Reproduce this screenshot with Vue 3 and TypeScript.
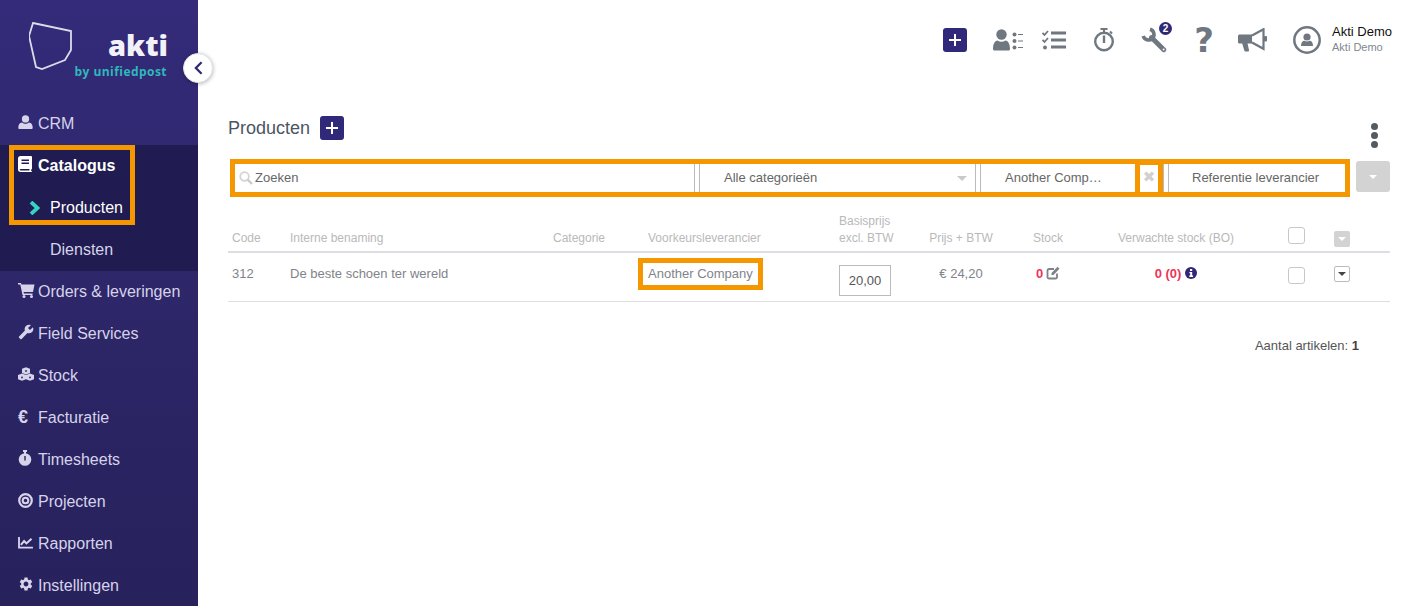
<script setup lang="ts">
interface Item { label: string; icon: string; }
const first: Item = { label: 'CRM', icon: 'user' };
const rest: Item[] = [
  { label: 'Orders & leveringen', icon: 'cart' },
  { label: 'Field Services', icon: 'wrench' },
  { label: 'Stock', icon: 'cubes' },
  { label: 'Facturatie', icon: 'euro' },
  { label: 'Timesheets', icon: 'watch' },
  { label: 'Projecten', icon: 'target' },
  { label: 'Rapporten', icon: 'chart' },
  { label: 'Instellingen', icon: 'cog' },
];
const cog = 'M19.14 12.94c.04-.3.06-.61.06-.94 0-.32-.02-.64-.07-.94l2.03-1.58c.18-.14.23-.41.12-.61l-1.92-3.32c-.12-.22-.37-.29-.59-.22l-2.39.96c-.5-.38-1.03-.7-1.62-.94l-.36-2.54c-.04-.24-.24-.41-.48-.41h-3.84c-.24 0-.43.17-.47.41l-.36 2.54c-.59.24-1.13.57-1.62.94l-2.39-.96c-.22-.08-.47 0-.59.22L2.74 8.87c-.12.21-.08.47.12.61l2.03 1.58c-.05.3-.09.63-.09.94s.02.64.07.94l-2.03 1.58c-.18.14-.23.41-.12.61l1.92 3.32c.12.22.37.29.59.22l2.39-.96c.5.38 1.03.7 1.62.94l.36 2.54c.05.24.24.41.48.41h3.84c.24 0 .44-.17.47-.41l.36-2.54c.59-.24 1.13-.56 1.62-.94l2.39.96c.22.08.47 0 .59-.22l1.92-3.32c.12-.22.07-.47-.12-.61l-2.01-1.58zM12 15.6c-1.98 0-3.6-1.62-3.6-3.6s1.62-3.6 3.6-3.6 3.6 1.62 3.6 3.6-1.62 3.6-3.6 3.6z';
const wrench = 'M22.7 19l-9.1-9.1c.9-2.3.4-5-1.5-6.9-2-2-5-2.4-7.4-1.3L9 6 6 9 1.6 4.7C.4 7.1.9 10.1 2.9 12.1c1.9 1.9 4.6 2.4 6.9 1.5l9.1 9.1c.4.4 1 .4 1.4 0l2.3-2.3c.5-.4.5-1.1.1-1.4z';
</script>

<template>
  <div class="app">
    <aside class="sidebar">
      <div class="brand">
        <svg class="logo-mark" viewBox="0 0 46 50" width="46" height="50">
          <polygon points="4,1 42,9 42,28 36,38 13,47 7,45 0,14" fill="none" stroke="#dddbea" stroke-width="1.800" />
        </svg>
        <div class="wordmark">akti</div>
        <div class="byline">by unifiedpost</div>
      </div>
      <button class="toggle" aria-label="Inklappen">
        <svg viewBox="0 0 12 16" width="11" height="14"><path d="M9.500 1.500 3 8l6.500 6.500" fill="none" stroke="#2e2876" stroke-width="2.600" /></svg>
      </button>

      <nav class="menu">
        <a class="item">
          <span class="ico">
            <svg viewBox="0 0 16 16" width="15" height="15"><circle cx="8" cy="4.200" r="3.900" fill="currentColor" /><path d="M1.600 15c-.8 0-1.300-.5-1.300-1.400C.3 10.400 1.700 8 4.300 8c1 1 2.300 1.400 3.700 1.400S10.700 9 11.700 8c2.600 0 4 2.400 4 5.600 0 .9-.5 1.400-1.300 1.400z" fill="currentColor" /></svg>
          </span>{{ first.label }}
        </a>
        <div class="sub">
          <div class="hl">
            <a class="item active">
              <span class="ico">
                <svg viewBox="0 0 14 16" width="14" height="16"><path fill-rule="evenodd" d="M2.500 0H13a1 1 0 0 1 1 1v11.500c0 .5-.3.8-.7.9-.3.600-.3 1.200 0 1.700.4.100.7.400.7.900H2.500C1 16 0 15 0 13.500v-11C0 1 1 0 2.500 0zM3.500 3.500V5H11V3.500zM3.500 6.500V8H11V6.500zM2.500 13c-1 .1-1 1.500 0 1.600h9c-.1-.5-.1-1.100 0-1.600z" fill="#fff" /></svg>
              </span>Catalogus
            </a>
            <a class="item subitem current">
              <svg class="chev" viewBox="0 0 11 14" width="11" height="14"><path d="M2 1 8.500 7 2 13" fill="none" stroke="#35d3c2" stroke-width="3.800" /></svg>
              Producten
            </a>
          </div>
          <a class="item subitem">Diensten</a>
        </div>
        <a v-for="it in rest" :key="it.label" class="item">
          <span class="ico">
            <svg v-if="it.icon === 'cart'" viewBox="0 0 17 16" width="17" height="16"><path d="M0 1h3l.5 1.600H16.500L15 10H5.500L6 11.500H14.500V13H4.500L2.300 2.500H0z" fill="currentColor" /><circle cx="6" cy="14.500" r="1.500" fill="currentColor" /><circle cx="13.500" cy="14.500" r="1.500" fill="currentColor" /></svg>
            <svg v-else-if="it.icon === 'wrench'" class="mirror" viewBox="0 0 24 24" width="16" height="16"><path :d="wrench" fill="currentColor" /></svg>
            <svg v-else-if="it.icon === 'cubes'" viewBox="0 0 16 14" width="16" height="14">
              <path d="M8 .2 12 1.700V6L8 7.500 4 6V1.700z" fill="currentColor" />
              <path d="M4 6.500 8 8V12.300L4 13.800 0 12.300V8z" fill="currentColor" />
              <path d="M12 6.500 16 8V12.300L12 13.800 8 12.300V8z" fill="currentColor" />
              <g fill="#2a2461"><circle cx="8" cy="4" r=".9" /><circle cx="4" cy="10.400" r=".9" /><circle cx="12" cy="10.400" r=".9" /></g>
            </svg>
            <span v-else-if="it.icon === 'euro'" class="euro">€</span>
            <svg v-else-if="it.icon === 'watch'" viewBox="0 0 14 16" width="14" height="16"><rect x="5" y="0" width="4" height="2" fill="currentColor" /><rect x="6" y="1" width="2" height="3" fill="currentColor" /><circle cx="7" cy="9.500" r="6.300" fill="currentColor" /><rect x="6.300" y="6" width="1.400" height="4.500" fill="#29235f" /></svg>
            <svg v-else-if="it.icon === 'target'" viewBox="0 0 16 16" width="15" height="15"><circle cx="8" cy="8" r="6.700" fill="none" stroke="currentColor" stroke-width="2.400" /><circle cx="8" cy="8" r="3" fill="none" stroke="currentColor" stroke-width="2.200" /></svg>
            <svg v-else-if="it.icon === 'chart'" viewBox="0 0 16 14" width="15" height="13"><path d="M1 1V12.500H16" fill="none" stroke="currentColor" stroke-width="2" /><path d="M3 9.500 6.500 5.500 9 8 14.500 3" fill="none" stroke="currentColor" stroke-width="2.200" /></svg>
            <svg v-else viewBox="0 0 24 24" width="16" height="16"><path :d="cog" fill="currentColor" /></svg>
          </span>{{ it.label }}
        </a>
      </nav>
    </aside>

    <main class="main">
      <header class="topbar">
        <button class="add" aria-label="Toevoegen"><span class="plus"></span></button>
        <svg class="t1" viewBox="0 0 30 22" width="30" height="22"><circle cx="8.500" cy="5.500" r="5.200" fill="#6f7780" /><path d="M1.500 21.500c-1 0-1.500-.6-1.500-1.500 0-5 2-8.500 4.500-8.500 2.500 1.600 5.500 1.600 8 0 2.500 0 4.500 3.500 4.500 8.500 0 .9-.5 1.500-1.500 1.500z" fill="#6f7780" /><g fill="#6f7780"><circle cx="21.500" cy="5.500" r="2" /><circle cx="21.500" cy="12" r="2" /><circle cx="21.500" cy="18.500" r="2" /><rect x="25" y="5" width="5" height="1" /><rect x="25" y="11.500" width="5" height="1" /><rect x="25" y="18" width="5" height="1" /></g></svg>
        <svg class="t2" viewBox="0 0 24 20" width="24" height="20"><g fill="none" stroke="#6f7780" stroke-width="1.800"><path d="M.5 3 2.500 5 6 1" /><path d="M.5 10 2.500 12 6 8" /></g><circle cx="3" cy="17.500" r="2" fill="#6f7780" /><rect x="9" y="1.500" width="15" height="3" fill="#6f7780" /><rect x="9" y="8.500" width="15" height="3" fill="#6f7780" /><rect x="9" y="15.500" width="15" height="3" fill="#6f7780" /></svg>
        <svg class="t3" viewBox="0 0 20 24" width="20" height="24"><rect x="6.500" y="0" width="7" height="2" fill="#6f7780" /><rect x="9" y="1" width="2" height="3" fill="#6f7780" /><path d="M16 3.500 18 5.500" stroke="#6f7780" stroke-width="2" /><circle cx="10" cy="13.500" r="8.800" fill="none" stroke="#6f7780" stroke-width="2.400" /><rect x="8.800" y="7.500" width="2.400" height="7.500" fill="#6f7780" /></svg>
        <div class="t4">
          <svg viewBox="0 0 26 26" width="26" height="26">
            <path d="M9 2.200A5.500 5.500 0 1 1 2.200 9" fill="none" stroke="#6f7780" stroke-width="3.600" />
            <path d="M10.500 10.500 22.800 22.800" stroke="#6f7780" stroke-width="4.800" stroke-linecap="round" />
            <circle cx="22.600" cy="22.600" r="1" fill="#fff" />
          </svg>
          <span class="badge">2</span>
        </div>
        <span class="t5">?</span>
        <svg class="t6" viewBox="0 0 29 24" width="29" height="24">
          <path d="M0 8C0 7 .8 6.500 1.800 6.500H14V15.500H9.500L11 22c.2.800-.3 1.500-1 1.500H7.500c-.6 0-1-.3-1.200-.9L4.200 15.500H1.800C.8 15.500 0 15 0 14z" fill="#6f7780" />
          <path d="M14 7.500 25.500 1.200V20.800L14 14.500" fill="none" stroke="#6f7780" stroke-width="2.200" />
          <rect x="26" y="8" width="3" height="5.500" rx="1" fill="#6f7780" />
        </svg>
        <svg class="t7" viewBox="0 0 28 28" width="28" height="28"><circle cx="14" cy="14" r="12.700" fill="none" stroke="#6f7780" stroke-width="2.500" /><circle cx="14" cy="11" r="3.600" fill="#6f7780" /><path d="M8 20c0-3.500 1.500-5.200 3.500-5.200 1.600 1 3.400 1 5 0 2 0 3.500 1.700 3.500 5.200z" fill="#6f7780" /></svg>
        <div class="who">
          <div class="who-name">Akti Demo</div>
          <div class="who-co">Akti Demo</div>
        </div>
      </header>

      <div class="title-row">
        <h1>Producten</h1>
        <button class="add" aria-label="Product toevoegen"><span class="plus"></span></button>
        <div class="kebab"><i></i><i></i><i></i></div>
      </div>

      <div class="filter-row">
        <div class="filters">
          <div class="f f-search">
            <svg viewBox="0 0 14 14" width="14" height="14"><circle cx="5.500" cy="5.500" r="4.300" fill="none" stroke="#d3d3d3" stroke-width="1.700" /><path d="M8.500 8.500 13 13" stroke="#c8c8c8" stroke-width="2.200" /></svg>
            <span>Zoeken</span>
          </div>
          <div class="f f-cat"><span>Alle categorieën</span><i class="tri"></i></div>
          <div class="f f-sup"><span>Another Comp…</span></div>
          <div class="f-x"><span>✖</span></div>
          <div class="f f-ref"><span>Referentie leverancier</span></div>
        </div>
        <button class="grey-btn big" aria-label="Opties"><i></i></button>
      </div>

      <table class="grid">
        <colgroup>
          <col class="w58" /><col class="w263" /><col class="w95" /><col class="w191" /><col class="w90" /><col class="w72" /><col class="w102" /><col class="w154" /><col class="w77" /><col class="w60" />
        </colgroup>
        <thead>
          <tr>
            <th>Code</th>
            <th>Interne benaming</th>
            <th>Categorie</th>
            <th>Voorkeursleverancier</th>
            <th>Basisprijs<br />excl. BTW</th>
            <th class="c">Prijs + BTW</th>
            <th class="c">Stock</th>
            <th class="c">Verwachte stock (BO)</th>
            <th class="chk"><span class="box head-box"></span></th>
            <th class="act"><button class="grey-btn" aria-label="Acties"><i></i></button></th>
          </tr>
        </thead>
        <tbody>
          <tr>
            <td>312</td>
            <td>De beste schoen ter wereld</td>
            <td></td>
            <td><span class="hl-cell">Another Company</span></td>
            <td class="price"><span class="price-input">20,00</span></td>
            <td class="c">€ 24,20</td>
            <td class="c"><span class="red">0</span><svg class="edit" viewBox="0 0 14 14" width="14" height="14"><path d="M11 7.500V11a1.500 1.500 0 0 1-1.500 1.500H3A1.500 1.500 0 0 1 1.500 11V4.500A1.500 1.500 0 0 1 3 3h5" fill="none" stroke="#7d8388" stroke-width="1.800" /><path d="M5.500 7 11.500.8 13.500 2.800 7.500 9H5.500z" fill="#7d8388" /></svg></td>
            <td class="c"><span class="red">0 (0)</span><svg class="info" viewBox="0 0 12 12" width="12" height="12"><circle cx="6" cy="6" r="6" fill="#2e2876" /><rect x="5" y="2" width="2.200" height="2" fill="#fff" /><path d="M4.400 5h2.800v3.600h.9V10H4.300V8.600h.9V6.300h-.8z" fill="#fff" /></svg></td>
            <td class="chk"><span class="box"></span></td>
            <td class="act"><button class="caret-btn" aria-label="Acties"><i></i></button></td>
          </tr>
        </tbody>
      </table>

      <p class="count">Aantal artikelen: <b>1</b></p>
    </main>
  </div>
</template>

<style>
html, body { margin: 0; padding: 0; background: #fff; overflow: hidden; }
</style>

<style scoped>
.app {
  display: flex;
  width: 1405px;
  height: 606px;
  overflow: hidden;
  font-family: "Liberation Sans", Arial, sans-serif;
}
.sidebar {
  position: relative;
  flex: 0 0 198px;
  background: linear-gradient(180deg, #342b7a 0%, #2d2668 50%, #27215c 100%);
  color: #d6d3ea;
}
.brand { position: relative; height: 103px; }
.logo-mark { position: absolute; left: 29px; top: 22px; }
.wordmark {
  position: absolute;
  right: 30px;
  top: 27px;
  font: 800 29px/36px "Open Sans", sans-serif;
  color: #f2f1f7;
}
.byline {
  position: absolute;
  right: 31px;
  top: 64px;
  font: 700 12px/16px "Open Sans", sans-serif;
  color: #2fb9bb;
  letter-spacing: .45px;
  white-space: nowrap;
}
.toggle {
  position: absolute;
  left: 183px;
  top: 53px;
  width: 30px;
  height: 30px;
  padding: 0;
  border: 1px solid #e3e3e3;
  border-radius: 50%;
  background: #fff;
  box-shadow: 0 1px 4px rgba(0, 0, 0, .3);
  display: flex;
  align-items: center;
  justify-content: center;
  z-index: 2;
}
.menu { display: flex; flex-direction: column; }
.item {
  display: flex;
  align-items: center;
  height: 42px;
  padding-left: 18px;
  font-size: 16px;
  color: #d6d3ea;
  white-space: nowrap;
}
.ico {
  flex: 0 0 20px;
  display: flex;
  align-items: center;
  margin-bottom: 4px;
  color: #d6d3ea;
}
.mirror { transform: scaleX(-1); }
.euro { font-weight: 700; font-size: 18px; line-height: 18px; margin-top: 2px; }
.sub { background: #201b50; }
.hl {
  width: 126px;
  height: 80px;
  box-sizing: border-box;
  margin: 0 0 4px 9px;
  border: 5px solid #f49700;
  display: flex;
  flex-direction: column;
}
.hl .item { flex: 0 0 42px; padding-left: 4px; }
.hl .item.active { margin-top: -5px; }
.hl .subitem { padding-left: 15px; }
.active { color: #fff; font-weight: 700; }
.subitem { padding-left: 50px; }
.current { color: #fff; }
.chev { margin: 0 10px 0 0; }
.main { flex: 1; min-width: 0; padding: 0 15px 0 30px; }
.topbar {
  display: flex;
  align-items: center;
  justify-content: flex-end;
  height: 80px;
  margin-right: -15px;
  padding-right: 13px;
}
.add {
  flex: none;
  width: 24px;
  height: 24px;
  padding: 0;
  border: 0;
  border-radius: 3px;
  background: #30297a;
  display: flex;
  align-items: center;
  justify-content: center;
}
.plus {
  width: 12px;
  height: 12px;
  background:
    linear-gradient(#fff, #fff) center / 12px 2px no-repeat,
    linear-gradient(#fff, #fff) center / 2px 12px no-repeat;
}
.t1 { margin-left: 26px; }
.t2 { margin-left: 19px; }
.t3 { margin-left: 28px; }
.t4 { position: relative; margin-left: 27px; height: 26px; width: 26px; }
.t5 {
  margin-left: 29px;
  width: 16px;
  display: flex;
  justify-content: center;
  font: 700 34px/30px "DejaVu Sans", sans-serif;
  color: #6f7780;
}
.t6 { margin-left: 26px; }
.t7 { margin-left: 26px; }
.badge {
  position: absolute;
  left: 18px;
  top: -5px;
  width: 13px;
  height: 13px;
  border-radius: 50%;
  background: #2e2876;
  color: #fff;
  font-size: 10px;
  font-weight: 700;
  line-height: 13px;
  text-align: center;
}
.who { margin: 0 0 1px 11px; width: 60px; }
.who-name { font-size: 13px; line-height: 15px; color: #111; white-space: nowrap; }
.who-co { margin-top: 1px; font-size: 11px; line-height: 15px; color: #808890; white-space: nowrap; }
.title-row {
  display: flex;
  align-items: center;
  height: 24px;
  margin-top: 36px;
  position: relative;
}
h1 { margin: 0 10px 0 0; font-size: 18px; font-weight: 400; color: #4b5563; }
.kebab {
  position: absolute;
  right: 12px;
  top: 7px;
  display: flex;
  flex-direction: column;
  gap: 2px;
}
.kebab i { width: 7px; height: 7px; border-radius: 50%; background: #555b63; }
.filter-row { display: flex; margin-top: 19px; margin-left: 2px; }
.filters {
  display: flex;
  box-sizing: border-box;
  width: 1120px;
  height: 38px;
  border: 5px solid #f49700;
  font-size: 13px;
  color: #666;
}
.f {
  box-sizing: border-box;
  display: flex;
  align-items: center;
  height: 28px;
  border-left: 1px solid #bbb;
  border-right: 1px solid #bbb;
  background: #fff;
}
.f span { margin-bottom: 2px; }
.f-search { width: 460px; border-left: 0; padding-left: 4px; gap: 2px; margin-right: 4px; }
.f-cat { width: 277px; padding-left: 24px; margin-right: 4px; position: relative; }
.f-sup { width: 155px; border-right: 0; padding-left: 24px; white-space: nowrap; }
.f-x {
  box-sizing: border-box;
  width: 28px;
  height: 28px;
  border: 5px solid #f49700;
  border-bottom: 0;
  border-top-width: 1px;
  color: #d0d0d0;
  font: 15px/25px "DejaVu Sans", sans-serif;
  text-align: center;
}
.f-ref { width: 177px; padding-left: 28px; border-right: 0; position: relative; white-space: nowrap; }
.f-ref::before {
  content: "";
  position: absolute;
  left: 4px;
  top: 0;
  bottom: 0;
  border-left: 1px solid #bbb;
}
.tri {
  position: absolute;
  right: 8px;
  top: 12px;
  border: 5px solid transparent;
  border-top-color: #c9c9c9;
  border-bottom: 0;
}
.grey-btn {
  display: flex;
  align-items: center;
  justify-content: center;
  width: 16px;
  height: 16px;
  padding: 0;
  border: 0;
  border-radius: 2px;
  background: #d3d3d3;
}
.grey-btn.big { width: 34px; height: 31px; margin: 2px 0 0 6px; border-radius: 3px; }
.grey-btn i, .caret-btn i {
  border: 4px solid transparent;
  border-top-color: #fff;
  border-bottom: 0;
}
.caret-btn {
  display: flex;
  align-items: center;
  justify-content: center;
  box-sizing: border-box;
  width: 16px;
  height: 16px;
  padding: 0;
  border: 1px solid #bbb;
  border-radius: 2px;
  background: #fff;
}
.caret-btn i { border-top-color: #444; }
.grid {
  table-layout: fixed;
  width: 1162px;
  margin-top: 16px;
  border-collapse: collapse;
  font-size: 13px;
}
.w58 { width: 58px; }
.w263 { width: 263px; }
.w95 { width: 95px; }
.w191 { width: 191px; }
.w90 { width: 90px; }
.w72 { width: 72px; }
.w102 { width: 102px; }
.w154 { width: 154px; }
.w77 { width: 77px; }
.w60 { width: 60px; }
th {
  padding: 0 0 4px 4px;
  font-size: 12px;
  font-weight: 400;
  line-height: 17px;
  text-align: left;
  vertical-align: bottom;
  color: #b9b9b9;
  border-bottom: 2px solid #dddde3;
}
td {
  height: 49px;
  box-sizing: border-box;
  padding: 13px 0 0 4px;
  vertical-align: top;
  line-height: 16px;
  color: #7f848a;
  border-bottom: 1px solid #dddde3;
}
.c { text-align: center; padding-left: 0; }
.chk { padding-left: 35px; }
.act { padding-left: 4px; }
.box {
  display: block;
  box-sizing: border-box;
  width: 17px;
  height: 17px;
  border: 1px solid #c8c8c8;
  border-radius: 3px;
  background: #fff;
}
td.chk .box { margin-top: 1px; }
th .head-box { margin-bottom: 3px; }
th.act { padding-bottom: 4px; }
.hl-cell {
  display: inline-block;
  margin: -8px 0 0 -10px;
  padding: 3px 5px;
  border: 5px solid #f49700;
  white-space: nowrap;
}
.price-input {
  display: block;
  box-sizing: border-box;
  width: 52px;
  height: 31px;
  margin-top: -1px;
  border: 1px solid #bbb;
  line-height: 29px;
  text-align: center;
  color: #555;
}
.red { color: #ee3558; font-weight: 700; }
.edit { vertical-align: -2px; margin-left: 3px; }
.info { vertical-align: -1px; margin-left: 4px; }
.count { margin: 36px 31px 0 0; font-size: 13px; line-height: 16px; text-align: right; color: #555; }
.count b { color: #444; }
</style>
